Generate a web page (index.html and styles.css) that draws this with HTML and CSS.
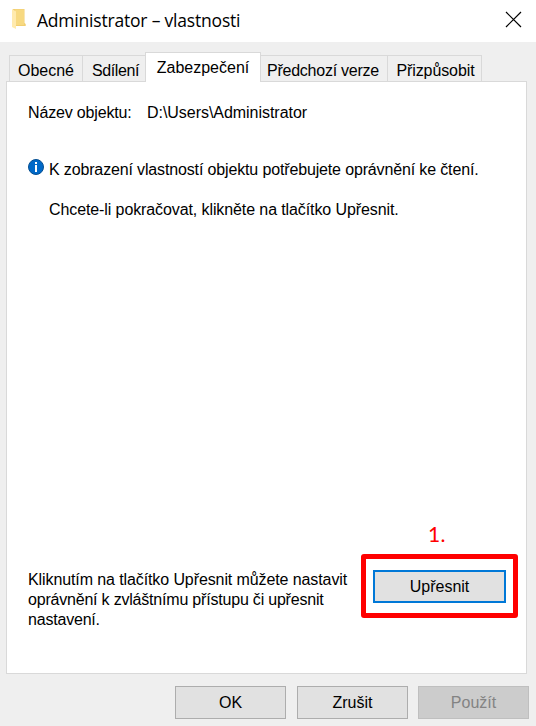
FILE: index.html
```html
<!DOCTYPE html>
<html lang="cs">
<head>
<meta charset="utf-8">
<title>Administrator – vlastnosti</title>
<link rel="stylesheet" href="styles.css">
</head>
<body>
<header class="titlebar">
  <svg class="folder" width="16" height="22" viewBox="0 0 16 22"><path d="M2 1h11.500v14l1.200 1v2H4z" fill="#f1ce70"/><path d="M4 1.500h9V17H4z" fill="#f7d981"/><path d="M1 1l4 2.500V21L1 19z" fill="#ffeaae"/></svg>
  <h1 class="title">Administrator – vlastnosti</h1>
  <svg class="close" width="17" height="17" viewBox="0 0 17 17"><path d="M1 1l15 15M16 1L1 16" stroke="#000" stroke-width="1.200"/></svg>
</header>
<main class="dialog">
  <nav class="tabs">
    <span class="tab general">Obecné</span>
    <span class="tab sharing">Sdílení</span>
    <span class="tab active">Zabezpečení</span>
    <span class="tab versions">Předchozí verze</span>
    <span class="tab customize">Přizpůsobit</span>
  </nav>
  <section class="panel">
    <div class="object"><span class="label">Název objektu:</span><span class="path">D:\Users\Administrator</span></div>
    <div class="notice">
      <svg class="info" width="16" height="16" viewBox="0 0 16 16"><circle cx="8" cy="8" r="7.500" fill="#0069c8" stroke="#064f91"/><path d="M7 3h2v2H7zM7 6h2v7H7z" fill="#fff"/></svg>
      <div class="messages">
        <p class="need">K zobrazení vlastností objektu potřebujete oprávnění ke čtení.</p>
        <p class="continue">Chcete-li pokračovat, klikněte na tlačítko Upřesnit.</p>
      </div>
    </div>
    <div class="advanced">
      <p class="hint"><span class="line-first">Kliknutím na tlačítko Upřesnit můžete nastavit</span><br>oprávnění k zvláštnímu přístupu či upřesnit<br>nastavení.</p>
      <div class="highlight"><span class="step">1.</span><button class="btn focus">Upřesnit</button></div>
    </div>
  </section>
  <footer class="actions">
    <button class="btn">OK</button>
    <button class="btn">Zrušit</button>
    <button class="btn" disabled>Použít</button>
  </footer>
</main>
</body>
</html>
```
FILE: styles.css
```css
* { box-sizing: border-box; }
body {
  margin: 0;
  width: 536px;
  height: 726px;
  overflow: hidden;
  background: #efefef;
  color: #000;
  font: 16px/20px "Liberation Sans", Arial, sans-serif;
}
p, h1 { margin: 0; }
.titlebar {
  display: flex;
  height: 42px;
  padding: 0 14px 0 11px;
  background: #fff;
}
.folder { margin-top: 8px; }
.title {
  margin-left: 10px;
  font: 17.5px/40px "Open Sans", "Noto Sans", sans-serif;
  letter-spacing: -.2px;
  white-space: nowrap;
}
.close { margin: 11px 0 0 auto; }
.dialog { padding: 10px 7px 0 6px; }
.tabs {
  display: flex;
  align-items: flex-end;
  height: 30px;
  padding-left: 3px;
}
.tab {
  height: 27px;
  padding-top: 5px;
  border: 1px solid #d9d9d9;
  border-width: 1px 0 0 1px;
  text-align: center;
  white-space: nowrap;
}
.general { width: 73px; }
.sharing { width: 63px; padding-left: 3px; letter-spacing: -.4px; }
.active {
  position: relative;
  z-index: 1;
  width: 116px;
  height: 30px;
  border-right-width: 1px;
  background: #fff;
}
.versions { width: 126px; padding-right: 2px; border-left: 0; letter-spacing: -.25px; }
.customize { width: 95px; border-right-width: 1px; padding-left: 2px; letter-spacing: -.1px; }
.panel {
  display: flex;
  flex-direction: column;
  width: 521px;
  height: 593px;
  margin-top: -1px;
  padding: 21px 8px 0 21px;
  border: 1px solid #d9d9d9;
  background: #fff;
}
.object { display: flex; white-space: nowrap; }
.label { width: 119px; letter-spacing: -.16px; }
.path { letter-spacing: -.04px; }
.notice { display: flex; margin-top: 37px; white-space: nowrap; }
.info { margin: -1px 5px 0 0; }
.need { letter-spacing: -.145px; }
.continue { margin-top: 20px; letter-spacing: -.1px; }
.advanced {
  display: flex;
  justify-content: space-between;
  align-items: flex-start;
  margin-top: 334px;
}
.hint { margin-top: 16px; letter-spacing: -.2px; white-space: nowrap; }
.line-first { letter-spacing: -.1px; }
.highlight {
  position: relative;
  width: 157px;
  height: 64px;
  padding: 11px 7px;
  border: 5px solid #f00;
  border-radius: 3px;
}
.step {
  position: absolute;
  left: 62px;
  top: -38px;
  color: #f00;
  font: 21px/26px Lato, sans-serif;
  letter-spacing: .3px;
}
.btn {
  width: 111px;
  height: 33px;
  padding: 0;
  border: 1px solid #adadad;
  background: #e1e1e1;
  color: #000;
  font: inherit;
}
.btn:disabled { border-color: #bfbfbf; background: #ccc; color: #838383; }
.focus { display: block; width: 133px; border: 2px solid #0078d7; }
.actions {
  display: grid;
  grid-template-columns: 122px 121px 111px;
  margin: 12px 0 0 169px;
}
```
